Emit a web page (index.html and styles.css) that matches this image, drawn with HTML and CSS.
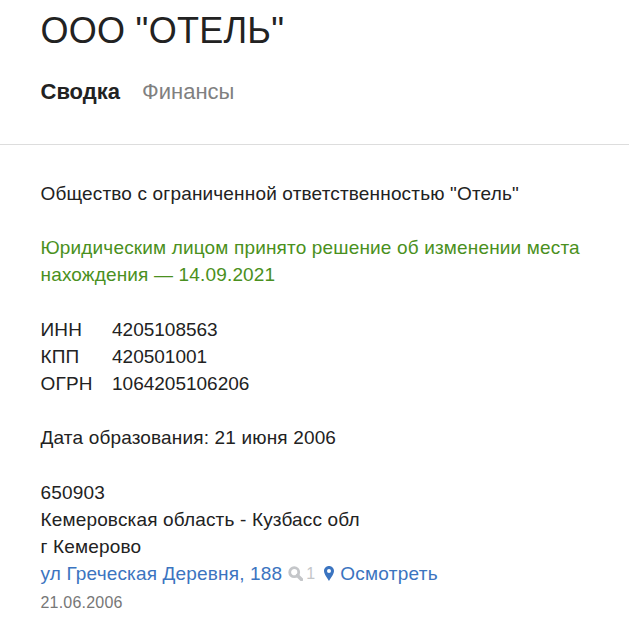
FILE: index.html
```html
<!DOCTYPE html>
<html lang="ru">
<head>
<meta charset="utf-8">
<title>ООО "ОТЕЛЬ"</title>
<link rel="stylesheet" href="styles.css">
</head>
<body>
<header class="head">
  <h1 class="title">ООО "ОТЕЛЬ"</h1>
  <nav class="tabs"><span class="tab active">Сводка</span><span class="tab">Финансы</span></nav>
</header>
<main class="content">
  <p class="line">Общество с ограниченной ответственностью "Отель"</p>
  <p class="line green">Юридическим лицом принято решение об изменении места нахождения — 14.09.2021</p>
  <dl class="codes">
    <dt>ИНН</dt><dd>4205108563</dd>
    <dt>КПП</dt><dd>420501001</dd>
    <dt>ОГРН</dt><dd>1064205106206</dd>
  </dl>
  <p class="line">Дата образования: 21 июня 2006</p>
  <address class="addr">
    <div>650903</div>
    <div>Кемеровская область - Кузбасс обл</div>
    <div>г Кемерово</div>
    <div class="street"><span class="link">ул Греческая Деревня, 188</span>
      <span class="count"><svg class="ico-search" viewBox="0 0 14 14" width="15" height="15"><circle cx="5.800" cy="5.800" r="4.200" fill="none" stroke="#c4c6c9" stroke-width="2.600"/><path d="M8.800 8.800 L12.600 12.600" stroke="#c4c6c9" stroke-width="3.200" stroke-linecap="round"/></svg>1</span>
      <span class="link view"><svg class="ico-pin" viewBox="0 0 10 15" width="10" height="15"><path fill-rule="evenodd" fill="#3b74c0" d="M5 0C2.200 0 0 2.200 0 5c0 3.200 3.600 7.600 5 10 1.400-2.400 5-6.800 5-10 0-2.800-2.200-5-5-5zm0 3a2 2 0 1 1 0 4 2 2 0 0 1 0-4z"/></svg>Осмотреть</span></div>
    <div class="date">21.06.2006</div>
  </address>
</main>
</body>
</html>
```
FILE: styles.css
```css
html, body { margin: 0; padding: 0; background: #fff; }
body { font-family: "Liberation Sans", Arial, sans-serif; font-size: 19px; letter-spacing: 0.16px; line-height: 27.2px; color: #222; overflow: hidden; height: 630px; }
.head { padding: 0 40.5px; height: 144px; border-bottom: 1px solid #ddd; }
.title { margin: 0; padding-top: 9px; font-size: 36px; letter-spacing: 0.27px; line-height: 44px; font-weight: 400; color: #222; }
.tabs { display: flex; gap: 22px; margin-top: 25px; font-size: 22px; letter-spacing: 0; line-height: 28px; }
.tab { color: #808080; }
.tab.active { color: #222; font-weight: 700; }
.content { padding: 34.6px 40.5px 0; }
.line { margin: 0 0 27.2px; }
.green { color: #4a9020; }
.codes { display: grid; grid-template-columns: 71.500px 1fr; margin: 0 0 27.2px; }
.codes dt, .codes dd { margin: 0; }
.codes dd { letter-spacing: 0; }
.addr { font-style: normal; }
.street { display: flex; align-items: center; gap: 6px; }
.link { color: #3b74c0; }
.count { display: inline-flex; align-items: center; gap: 3px; color: #c4c6c9; font-size: 16px; }
.view { display: inline-flex; align-items: center; gap: 6px; margin-left: 3px; letter-spacing: 0.25px; }
.date { color: #777; font-size: 16px; letter-spacing: 0.2px; margin-top: 1px; }
```
